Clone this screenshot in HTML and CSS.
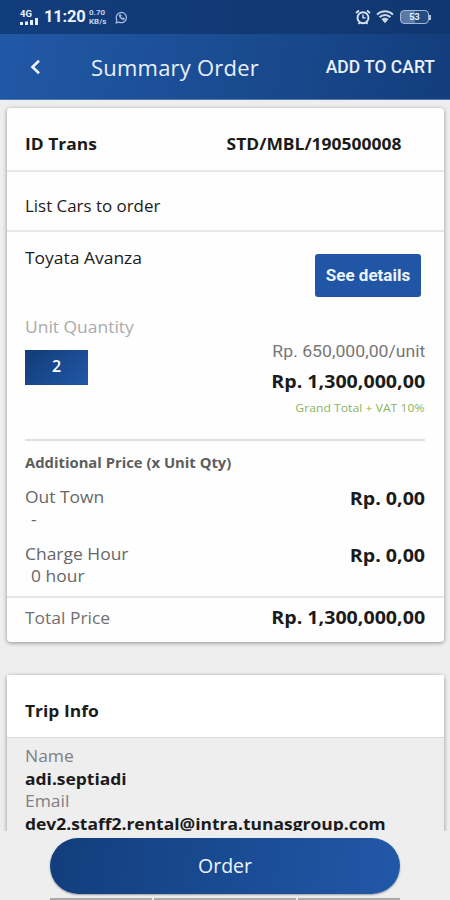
FILE: index.html
```
<!DOCTYPE html>
<html lang="en">
<head>
<meta charset="utf-8">
<title>Summary Order</title>
<link rel="stylesheet" href="styles.css">
</head>
<body>
<div class="screen">
  <div class="status">
    <div class="signal">
      <span class="net">4G</span>
      <svg width="18" height="7" viewBox="0 0 18 7" fill="#e6edf8"><path d="M0 4h3v3H0zM5 3.500h3v3.500H5zM10 2h3v5H10zM15 0h3v7H15z"/></svg>
    </div>
    <span class="clock">11:20</span>
    <div class="speed"><span>0.70</span><span>KB/s</span></div>
    <svg class="chat" width="13" height="13" viewBox="0 0 14 14" fill="none" stroke="#a9bedf" stroke-width="1.300"><path d="M1.200 12.800l.8-3A5.500 5.500 0 1 1 4.300 12z"/><path d="M4.600 4.200c-.3 2.400 2.400 5.200 5 5.100l.5-1.300-1.500-.8-.8.7C6.900 7.500 6.400 7 6 6.200l.7-.8-.7-1.500z" fill="#a9bedf" stroke-width=".8"/></svg>
    <svg class="alarm" width="16" height="16" viewBox="0 0 16 16" fill="none" stroke="#dce6f5"><circle cx="8" cy="8.700" r="5.500" stroke-width="1.900"/><path d="M8 5.500v3.400h2.700" stroke-width="1.400"/><path d="M1 4l3-2.500M15 4l-3-2.500M3.500 15l1.200-1.500M12.500 15l-1.200-1.500" stroke-width="1.800"/></svg>
    <svg class="wifi" width="18" height="14" viewBox="0 0 18 14" fill="none" stroke="#c9d7ec"><path d="M1 4.600a11.500 11.500 0 0 1 16 0" stroke-width="2"/><path d="M3.600 7.300a7.500 7.500 0 0 1 10.800 0" stroke-width="2.200"/><path d="M5.500 9.300a5 5 0 0 1 7 0L9 13.200z" fill="#c9d7ec" stroke="none"/></svg>
    <div class="battery"><span class="cell">53</span><span class="tip"></span></div>
  </div>
  <header class="bar">
    <svg class="back" width="11" height="16" viewBox="0 0 11 16" fill="none" stroke="#eef4ff" stroke-width="2.600"><path d="M9 1.800L2.500 8L9 14.200"/></svg>
    <h1 class="title"><span>Summary Order</span></h1>
    <span class="cart">ADD TO CART</span>
  </header>
  <main class="content">
    <section class="card">
      <div class="row id-row"><b class="wide">ID Trans</b><b class="wide right">STD/MBL/190500008</b></div>
      <div class="row list-row"><span class="wide list-label">List Cars to order</span></div>
      <div class="car">
        <div class="car-left">
          <span class="wide car-name">Toyata Avanza</span>
          <span class="wide qty-label">Unit Quantity</span>
          <span class="qty">2</span>
        </div>
        <div class="car-right">
          <span class="details">See details</span>
          <span class="wide right unit-price">Rp. 650,000,00/unit</span>
          <b class="wide right price">Rp. 1,300,000,00</b>
          <span class="wide right vat">Grand Total + VAT 10%</span>
        </div>
      </div>
      <div class="extra">
        <b class="wide extra-title">Additional Price (x Unit Qty)</b>
        <div class="charge">
          <div class="charge-text"><span class="wide">Out Town</span><span class="wide sub">-</span></div>
          <b class="wide right price zero">Rp. 0,00</b>
        </div>
        <div class="charge second">
          <div class="charge-text"><span class="wide">Charge Hour</span><span class="wide sub">0 hour</span></div>
          <b class="wide right price zero">Rp. 0,00</b>
        </div>
      </div>
      <div class="total"><span class="wide total-label">Total Price</span><b class="wide right price">Rp. 1,300,000,00</b></div>
    </section>
    <section class="card trip">
      <div class="trip-head"><b class="wide">Trip Info</b></div>
      <div class="trip-body">
        <span class="wide field">Name</span>
        <b class="wide name">adi.septiadi</b>
        <span class="wide field">Email</span>
        <b class="wide email">dev2.staff2.rental@intra.tunasgroup.com</b>
      </div>
    </section>
  </main>
  <footer class="foot">
    <div class="order"><span>Order</span></div>
    <div class="strip"><i></i><i></i><i></i></div>
  </footer>
</div>
</body>
</html>
```
FILE: styles.css
```
* { box-sizing: border-box; }
body { margin: 0; font-family: "Open Sans", sans-serif; font-size: 16px; color: #1b1b1b; background: #eee; }
.screen { width: 450px; height: 900px; display: flex; flex-direction: column; overflow: hidden; background: #eee; }
.screen span, .screen b { white-space: nowrap; }
.wide { transform: scaleX(1.09); transform-origin: left center; }
.right { transform-origin: right center; }

.status { height: 34px; flex: none; display: flex; align-items: center; padding: 0 19px 0 20px; color: #eef3fb; background: linear-gradient(90deg, #123d7c, #10376f); }
.signal { display: flex; flex-direction: column; width: 20px; height: 15px; }
.net { font: 700 9.500px/8px Roboto, sans-serif; }
.clock { font: 700 16.500px/20px Roboto, sans-serif; letter-spacing: -.2px; margin-left: 4px; width: 42px; }
.speed { display: flex; flex-direction: column; width: 19px; margin-left: 3px; font: 700 8px/9px Roboto, sans-serif; color: #c3d2e9; }
.chat { margin-left: 7px; }
.alarm { margin-left: auto; }
.wifi { margin-left: 5px; }
.battery { display: flex; align-items: center; margin-left: 6px; }
.cell { width: 29px; height: 14px; border: 1px solid #a3b7d6; border-radius: 4px; background: linear-gradient(90deg, #5a79a8 50%, #244b84 50%); font: 700 9px/12px Roboto, sans-serif; text-align: center; }
.tip { width: 2px; height: 5px; background: #b4c5df; }

.bar { height: 66px; flex: none; display: flex; align-items: center; padding: 0 15px 0 30px; color: #e8f1fd; background: linear-gradient(102deg, #2158a6, #1a4c92 50%, #133d7c); border-bottom: 1px solid #517bb0; }
.title { margin: 0 0 0 50px; font-size: 22px; font-weight: 400; line-height: 30px; letter-spacing: .22px; }
.cart { margin-left: auto; font: 500 17.500px/24px Roboto, sans-serif; }

.content { height: 731px; flex: none; overflow: hidden; padding: 8px 6px 0 7px; }
.card { background: #fefefe; border-radius: 4px; box-shadow: 0 1px 4px rgba(0,0,0,.4); height: 534px; }
.row { display: flex; align-items: center; padding: 0 43px 0 18px; border-bottom: 2px solid #e8e8e8; }
.id-row { height: 64px; padding-top: 9px; justify-content: space-between; }
.list-row { height: 60px; padding-top: 9px; }
.list-label { font-size: 15.500px; }
.car { height: 209px; margin: 0 19px 0 18px; display: flex; justify-content: space-between; border-bottom: 2px solid #e0e0e0; }
.car-left, .car-right { display: flex; flex-direction: column; line-height: 22px; }
.car-right { align-items: flex-end; }
.car-name { margin-top: 15px; }
.qty-label { margin-top: 47px; color: #aaa; }
.qty { margin-top: 12px; width: 63px; height: 35px; line-height: 33px; text-align: center; color: #fff; font-weight: 600; background: linear-gradient(135deg, #123b78, #2158a6); }
.details { width: 106px; height: 43px; margin: 22px 4px 0 0; border-radius: 3px; background: #2056a5; color: #edf4fe; text-align: center; font: 700 17px/43px Roboto, sans-serif; }
.unit-price { margin-top: 44px; color: #777; font-family: Roboto, sans-serif; font-size: 16.200px; }
.price { font-size: 18px; line-height: 24px; }
.car-right .price { margin-top: 6px; }
.vat { margin-top: 7px; font-size: 11.200px; line-height: 16px; color: #8bb45a; }
.extra { height: 157px; padding: 12px 19px 0 18px; border-bottom: 2px solid #e6e6e6; color: #666; }
.extra-title { display: block; font-size: 13.600px; line-height: 20px; color: #5e5e5e; }
.charge { display: flex; justify-content: space-between; height: 57px; margin-top: 13px; }
.second { margin-top: 0; }
.charge-text { display: flex; flex-direction: column; line-height: 22.500px; }
.charge-text > :first-child { height: 22px; }
.sub { margin-left: 6px; }
.zero { color: #1b1b1b; }
.total { height: 44px; padding: 0 19px 5px 18px; display: flex; align-items: center; justify-content: space-between; }
.total .price { margin-top: -2px; }
.total-label { color: #707070; }

.trip { margin-top: 33px; height: 260px; border-radius: 2px; background: #eee; }
.trip-head { height: 63px; padding: 9px 18px 0; display: flex; align-items: center; background: #fff; border-bottom: 1px solid #d8d8d8; }
.trip-body { display: flex; flex-direction: column; padding: 7px 18px 0; line-height: 22.600px; }
.field { color: #808080; }

.foot { height: 69px; flex: none; display: flex; flex-direction: column; align-items: center; padding-top: 7px; background: #eee; }
.order { width: 350px; height: 56px; flex: none; border-radius: 28px; background: linear-gradient(100deg, #133d7c, #194b92 50%, #2158a8); color: #edf4fe; text-align: center; font-size: 19.500px; line-height: 56px; box-shadow: 0 1px 2px rgba(0,0,0,.35); }
.strip { display: flex; gap: 2px; width: 350px; margin-top: 4px; height: 2px; flex: none; }
.strip i { flex: 102 1 0; background: #aaa; }
.strip i:nth-child(2) { flex-grow: 143; }
```
